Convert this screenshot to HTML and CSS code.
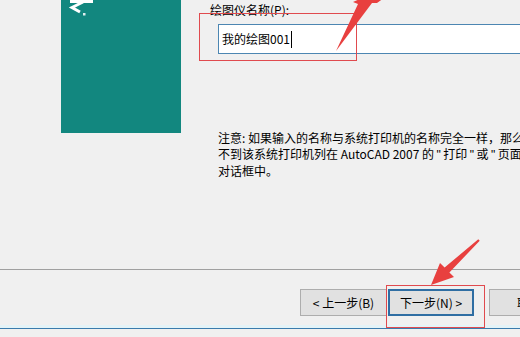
FILE: index.html
```html
<!DOCTYPE html>
<html lang="zh-CN">
<head>
    <meta charset="UTF-8">
    <meta name="viewport" content="width=device-width, initial-scale=1.0">
    <title>添加绘图仪 - 绘图仪名称</title>
    <link rel="stylesheet" href="styles.css">
</head>
<body>
    <div class="wizard">
        <div class="content">
            <!-- Left picture panel -->
            <div class="banner">
                <svg class="banner-logo" width="40" height="20" viewBox="0 0 40 20">
                    <rect x="9" y="0" width="23" height="3" fill="#fff"/>
                    <path d="M22 2 L11 7.5 L19 12" fill="none" stroke="#fff" stroke-width="3"/>
                    <rect x="22" y="13" width="2.5" height="2.5" fill="#dfeeee"/>
                </svg>
            </div>

            <div class="main">
                <div class="field-label">绘图仪名称(P):</div>
                <div class="field">
                    <span class="field-text">我的绘图001</span><span class="caret"></span>
                </div>
                <p class="note">注意: 如果输入的名称与系统打印机的名称完全一样，那么将看<br>不到该系统打印机列在 AutoCAD 2007 的<span class="q">"</span>打印<span class="q">"</span>或<span class="q">"</span>页面设置<span class="q">"</span><br>对话框中。</p>
            </div>
        </div>

        <div class="separator"></div>

        <div class="footer">
            <button class="btn">&lt; 上一步(B)</button>
            <button class="btn btn-focus">下一步(N) &gt;</button>
            <button class="btn btn-cancel">取消</button>
        </div>

        <div class="taskbar"></div>
    </div>

    <!-- Red annotations drawn over the dialog -->
    <svg class="marks" width="520" height="337" viewBox="0 0 520 337">
        <rect x="199.5" y="13.5" width="157" height="47" fill="none" stroke="#e04a4e" stroke-width="1"/>
        <rect x="386.5" y="285.5" width="98" height="42" fill="none" stroke="#e04a4e" stroke-width="1"/>
        <polygon points="336,51 358,4 353,2 362,-2 384,-2 377,3 372,3" fill="#e8403f"/>
        <polygon points="431,285 440,263 444.6,267.5 478.3,239.3 479.7,240.7 449.4,272.5 454,277" fill="#e8403f"/>
    </svg>
</body>
</html>
```

FILE: styles.css
```css
/* General Body Style */
body {
    margin: 0;
    padding: 0;
    width: 520px;
    height: 337px;
    overflow: hidden;
    position: relative;
    background-color: #f0f0f0;
    font-family: 'Noto Sans CJK SC', 'Noto Sans', sans-serif;
    font-size: 12px;
    color: #000;
}

.wizard {
    display: flex;
    flex-direction: column;
    height: 337px;
}

/* Upper part of the dialog */
.content {
    display: flex;
    height: 269px;
    flex: none;
}

.banner {
    flex: none;
    margin-left: 61px;
    width: 120px;
    height: 133px;
    background-color: #12877f;
}

.banner-logo {
    display: block;
}

.main {
    flex: none;
    margin-left: 29px;
    padding-top: 2px;
    width: 330px;
}

.field-label {
    line-height: 16px;
    white-space: nowrap;
}

.field {
    display: flex;
    align-items: center;
    box-sizing: border-box;
    margin-top: 6px;
    margin-left: 8px;
    width: 330px;
    height: 30px;
    padding-left: 3px;
    background-color: #fff;
    border: 1px solid #4c86b2;
}

.field-text {
    line-height: 16px;
}

.caret {
    display: inline-block;
    width: 1px;
    height: 17px;
    margin-left: 1px;
    background-color: #000;
}

.note {
    margin: 76px 0 0 8px;
    line-height: 15.5px;
    white-space: nowrap;
}

/* narrow quote marks, as in the dialog font */
.note .q {
    font-family: 'Liberation Sans', sans-serif;
    padding: 0 2.5px;
}

/* Separator above the buttons */
.separator {
    flex: none;
    height: 1px;
    background-color: #a0a0a0;
}

/* Button row */
.footer {
    flex: none;
    display: flex;
    height: 58px;
    padding: 19px 0 0 300px;
    box-sizing: border-box;
}

.btn {
    flex: none;
    box-sizing: border-box;
    width: 87px;
    height: 27px;
    padding: 0;
    margin: 0;
    font-family: 'Noto Sans CJK SC', 'Noto Sans', sans-serif;
    font-size: 12px;
    color: #000;
    background-color: #e1e1e1;
    border: 1px solid #adadad;
}

.btn-focus {
    width: 86px;
    margin-left: 1px;
    border: 2px solid #2f6ea3;
}

.btn-cancel {
    width: 80px;
    margin-left: 15px;
}

/* Bottom edge of the window */
.taskbar {
    flex: 1;
    border-top: 1px solid #3a7bac;
    background-color: #f0f0f0;
    box-shadow: 0 -3px 0 #e4f3f7;
}

.marks {
    position: absolute;
    top: 0;
    left: 0;
    pointer-events: none;
}
```
